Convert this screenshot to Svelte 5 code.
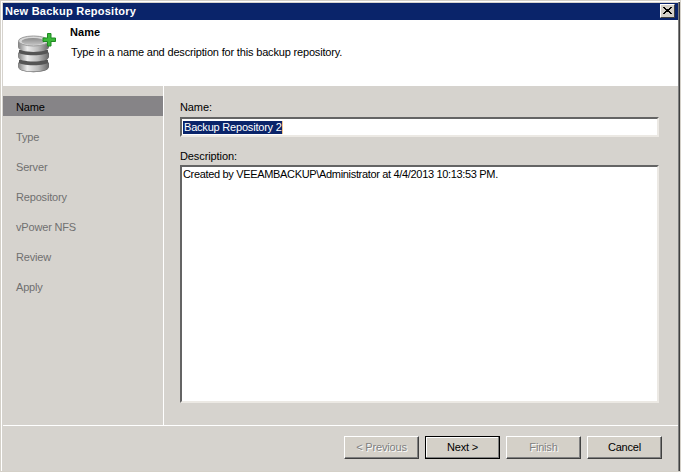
<script>
  const steps = ['Name', 'Type', 'Server', 'Repository', 'vPower NFS', 'Review', 'Apply'];
</script>

<div class="win">
  <div class="title">
    <span>New Backup Repository</span>
    <div class="close">
      <svg width="9" height="8" viewBox="0 0 9 8" shape-rendering="crispEdges"><path d="M0 0h2v1h1v1h3v-1h1v-1h2v1h-1v1h-1v1h-1v1h1v1h1v1h1v1h-2v-1h-1v-1h-3v1h-1v1h-2v-1h1v-1h1v-1h1v-1h-1v-1h-1v-1h-1z" fill="#000"/></svg>
    </div>
  </div>
  <div class="head">
    <svg class="logo" width="38" height="40" viewBox="0 0 38 40">
      <defs>
        <linearGradient id="m" x1="0" x2="1" y1="0" y2="0">
          <stop offset="0" stop-color="#808080"/><stop offset=".3" stop-color="#ececec"/><stop offset=".65" stop-color="#bcbcbc"/><stop offset="1" stop-color="#666"/>
        </linearGradient>
        <linearGradient id="t" x1="0" x2="0" y1="0" y2="1">
          <stop offset="0" stop-color="#8c8c8c"/><stop offset="1" stop-color="#c4c4c4"/>
        </linearGradient>
      </defs>
      <path d="M1 27v8c0 5.500 29 5.500 29 0v-8z" fill="#555"/>
      <path d="M0 28.500v5.500c0 6 31 6 31 0v-5.500c0 5-31 5-31 0z" fill="url(#m)"/>
      <path d="M1 17v8c0 5.500 29 5.500 29 0v-8z" fill="#555"/>
      <path d="M0 18.500v5.500c0 6 31 6 31 0v-5.500c0 5-31 5-31 0z" fill="url(#m)"/>
      <path d="M0 8v6c0 6.500 31 6.500 31 0v-6z" fill="url(#m)"/>
      <ellipse cx="15.500" cy="8" rx="15" ry="5" fill="#d8d8d8" stroke="#9a9a9a"/>
      <ellipse cx="15" cy="8.500" rx="11.500" ry="3.500" fill="url(#t)"/>
      <path d="M29.500 .5h3.500v4.500h4.500v3.500h-4.500v4.500h-3.500v-4.500h-4.500v-3.500h4.500z" fill="#3cb83a" stroke="#1f8a22"/>
    </svg>
    <div class="headtext">
      <b>Name</b>
      <p>Type in a name and description for this backup repository.</p>
    </div>
  </div>
  <div class="main">
    <nav class="side">
      {#each steps as s, i}
        <div class="step" class:on={i === 0} class:dim={i !== 0}>{s}</div>
      {/each}
    </nav>
    <div class="form">
      <div class="lab">Name:</div>
      <div class="field one"><span class="sel">Backup Repository 2</span></div>
      <div class="lab second">Description:</div>
      <div class="field area">Created by VEEAMBACKUP\Administrator at 4/4/2013 10:13:53 PM.</div>
    </div>
  </div>
  <div class="foot">
    <div class="btn off">&lt; Previous</div>
    <div class="btn def">Next &gt;</div>
    <div class="btn off">Finish</div>
    <div class="btn">Cancel</div>
  </div>
</div>

<style>
  :global(body) { margin: 0; background: #d4d0c8; }
  .win {
    width: 681px; height: 472px; box-sizing: border-box;
    display: flex; flex-direction: column;
    background: #d6d3ce;
    border: 1px solid #d4d0c8;
    box-shadow: inset 1px 1px 0 #fff, inset -1px 0 0 #404040, inset -2px 0 0 #808080;
    padding: 2px 2px 0 2px;
    font: 11px/13px "Liberation Sans", Arial, sans-serif;
    letter-spacing: -0.17px;
    color: #000;
    overflow: hidden;
  }
  .title {
    height: 17px; flex: none; background: #0a246a; color: #fff;
    font-weight: bold; display: flex; align-items: center; justify-content: space-between;
    padding: 0 3px 0 2px;
    letter-spacing: 0.25px;
  }
  .close {
    width: 15px; height: 14px; box-sizing: border-box; background: #d4d0c8;
    border: 1px solid; border-color: #fff #404040 #404040 #fff;
    display: flex; align-items: center; justify-content: center;
    align-self: flex-start; margin-top: 1px;
  }
  .head {
    height: 66px; flex: none; background: #fff; display: flex;
    box-sizing: border-box; padding: 6px 0 0 15px;
  }
  .logo { margin-top: 7px; }
  .headtext { margin-left: 14px; }
  .headtext b { display: block; line-height: 13px; letter-spacing: 0.05px; }
  .headtext p { margin: 7px 0 0 1px; line-height: 13px; }
  .main { height: 339px; flex: none; display: flex; border-bottom: 1px solid #fff; }
  .side {
    width: 160px; flex: none; border-right: 1px solid #fff; padding-top: 10px;
  }
  .step { height: 20px; line-height: 22px; padding-left: 13px; margin-bottom: 10px; }
  .step.on { background: #868487; color: #000; }
  .step.dim { color: #707070; }
  .form { flex: 1; padding: 15px 0 0 16px; width: 0; }
  .lab { height: 13px; line-height: 13px; margin-bottom: 3px; letter-spacing: -0.1px; }
  .second { margin-top: 13px; margin-bottom: 2px; }
  .field {
    width: 479px; box-sizing: border-box; background: #fff;
    border: 2px solid; border-color: #646464 #ece9e4 #ece9e4 #646464;
    padding: 2px 1px 0; white-space: nowrap;
  }
  .one { height: 20px; }
  .area { height: 238px; padding: 1px; line-height: 13px; letter-spacing: -0.33px; }
  .sel {
    background: #0a246a; color: #fff; display: inline-block; height: 13px;
    padding: 0 0 0 1px; letter-spacing: -0.2px; border-right: 1px solid #f0c890;
  }
  .foot {
    flex: 1; display: flex; justify-content: flex-end; gap: 6px;
    padding: 10px 16px 0 0;
  }
  .btn {
    width: 75px; height: 23px; box-sizing: border-box; text-align: center;
    line-height: 21px; border: 1px solid; border-color: #fff #404040 #404040 #fff;
    background: #d4d0c8; box-shadow: inset -1px -1px 0 #808080;
  }
  .btn.off { color: #808080; text-shadow: 1px 1px 0 #fff; }
  .btn.def { border-color: #000; box-shadow: inset -1px -1px 0 #808080, inset 1px 1px 0 #fff; }
</style>
